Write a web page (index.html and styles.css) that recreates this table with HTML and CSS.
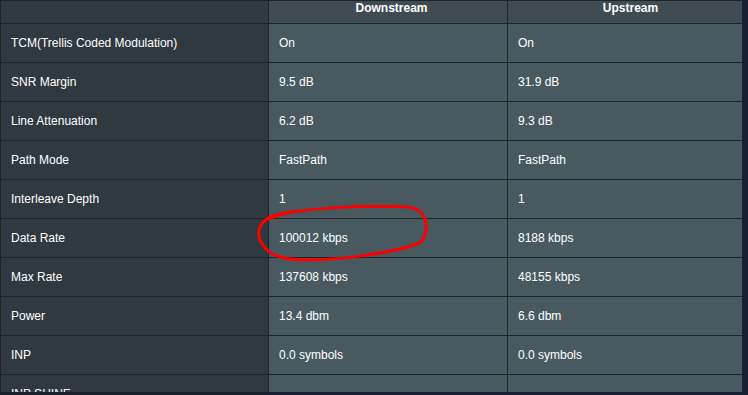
FILE: index.html
```html
<!DOCTYPE html>
<html>
	<head>
		<meta charset="utf-8" />
		<meta name="viewport" content="width=device-width, initial-scale=1">
		<title>DSL Line Statistics</title>
		<link rel="stylesheet" href="styles.css">
	</head>
	<body>
		<div class="panel">
			<table class="stats">
				<colgroup>
					<col class="c-label">
					<col class="c-down">
					<col class="c-up">
				</colgroup>
				<thead>
					<tr>
						<th></th>
						<th>Downstream</th>
						<th>Upstream</th>
					</tr>
				</thead>
				<tbody>
					<tr><td>TCM(Trellis Coded Modulation)</td><td>On</td><td>On</td></tr>
					<tr><td>SNR Margin</td><td>9.5 dB</td><td>31.9 dB</td></tr>
					<tr><td>Line Attenuation</td><td>6.2 dB</td><td>9.3 dB</td></tr>
					<tr><td>Path Mode</td><td>FastPath</td><td>FastPath</td></tr>
					<tr><td>Interleave Depth</td><td>1</td><td>1</td></tr>
					<tr><td>Data Rate</td><td>100012 kbps</td><td>8188 kbps</td></tr>
					<tr><td>Max Rate</td><td>137608 kbps</td><td>48155 kbps</td></tr>
					<tr><td>Power</td><td>13.4 dbm</td><td>6.6 dbm</td></tr>
					<tr><td>INP</td><td>0.0 symbols</td><td>0.0 symbols</td></tr>
					<tr><td>INP SHINE</td><td></td><td></td></tr>
				</tbody>
			</table>

			<!-- red marker circled round the downstream data rate -->
			<svg class="marker" width="742" height="392" viewBox="0 0 742 392">
				<path d="M269 219 C290 208, 360 205, 408 207 C430 209, 430 236, 419 243 C398 252, 330 263, 290 259 C263 256, 254 236, 261 225 C266 217, 276 213, 302 211"
					fill="none" stroke="#f00" stroke-width="3" stroke-linecap="round" stroke-linejoin="round" />
			</svg>
		</div>
	</body>
</html>
```

FILE: styles.css
```css
* {
	padding: 0;
	margin: 0;
}

body {
	background-color: #1b2030;
	font-family: "Liberation Sans", Arial, sans-serif;
	font-size: 12px;
	color: #fff;
}

.panel {
	width: 742px;
	height: 392px;
	overflow: hidden;
	position: relative;
}

.stats {
	border-collapse: collapse;
	table-layout: fixed;
	width: 747px;
}

.c-label {
	width: 268px;
}

.c-down {
	width: 239px;
}

.stats th,
.stats td {
	border: 1px solid #1f2427;
	text-align: left;
}

.stats th {
	height: 22px;
	line-height: 15px;
	vertical-align: top;
	padding-left: 7px;
	text-align: center;
	font-weight: bold;
	background-color: #3f4d53;
}

.stats th:first-child {
	background-color: #2f393f;
}

.stats td {
	height: 38px;
	padding: 0 10px;
	background-color: #485a60;
}

.stats td:first-child {
	background-color: #2f393f;
}

.marker {
	position: absolute;
	top: 0;
	left: 0;
	pointer-events: none;
}
```
